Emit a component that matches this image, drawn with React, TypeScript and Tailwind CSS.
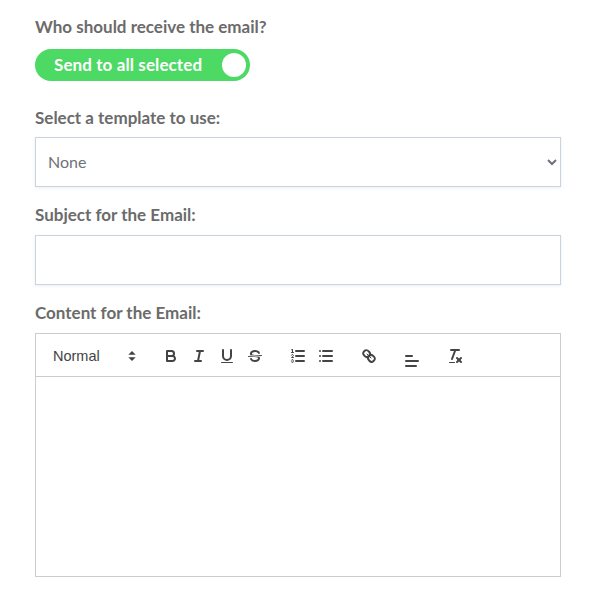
const label = "block text-[17px] leading-[24px] font-bold text-[#6b6b6b]";
const fieldBox =
  "block w-full h-[50px] border border-[#ccd2de] bg-white px-2 text-[16px] text-[#6e7278] shadow-[0_1px_3px_rgba(120,140,180,0.15)] outline-none";

const QuillIcon = ({ children }: { children: React.ReactNode }) => (
  <svg
    viewBox="0 0 18 18"
    className="w-[18px] h-[18px] block"
    fill="none"
    stroke="#444"
    strokeWidth={2}
    strokeLinecap="round"
    strokeLinejoin="round"
  >
    {children}
  </svg>
);

const Btn = ({ children, className = "" }: { children: React.ReactNode; className?: string }) => (
  <span className={`w-[28px] h-[24px] px-[5px] py-[3px] block ${className}`}>
    <QuillIcon>{children}</QuillIcon>
  </span>
);

const Toolbar = () => (
  <div className="h-[43px] border-b border-[#ccc] flex items-center px-[8px] pt-[2px] font-['Liberation_Sans',sans-serif]">
    <div className="w-[98px] mr-[15px] h-[24px] flex items-center justify-between pl-[9px] pr-[1px] text-[14.5px] font-medium text-[#444]">
      <span className="mt-[1px]">Normal</span>
      <svg viewBox="0 0 18 18" className="w-[18px] h-[18px]" fill="#444" stroke="#444" strokeWidth={1.4}>
        <polygon points="7 11 9 13 11 11 7 11" />
        <polygon points="7 7 9 5 11 7 7 7" />
      </svg>
    </div>
    <div className="flex mr-[15px]">
      <Btn>
        <path d="M5,4H9.5A2.5,2.5,0,0,1,12,6.5v0A2.5,2.5,0,0,1,9.5,9H5A0,0,0,0,1,5,9V4A0,0,0,0,1,5,4Z" />
        <path d="M5,9h5.5A2.5,2.5,0,0,1,13,11.5v0A2.5,2.5,0,0,1,10.5,14H5a0,0,0,0,1,0,0V9A0,0,0,0,1,5,9Z" />
      </Btn>
      <Btn>
        <line x1="7" x2="13" y1="4" y2="4" />
        <line x1="5" x2="11" y1="14" y2="14" />
        <line x1="8" x2="10" y1="14" y2="4" />
      </Btn>
      <Btn>
        <path d="M5,3V9a4.012,4.012,0,0,0,4,4H9a4.012,4.012,0,0,0,4-4V3" />
        <rect x="3" y="15" width="12" height="1" rx="0.5" fill="#444" stroke="none" />
      </Btn>
      <Btn>
        <line x1="15.5" x2="2.5" y1="8.5" y2="9.5" strokeWidth={1} />
        <path
          fill="#444"
          stroke="none"
          d="M9.007,8C6.542,7.791,6,7.519,6,6.5,6,5.792,7.283,5,9,5c1.571,0,2.765.679,2.969,1.309a1,1,0,0,0,1.9-.617C13.356,4.106,11.354,3,9,3,6.2,3,4,4.538,4,6.5a3.2,3.2,0,0,0,.5,1.843Z"
        />
        <path
          fill="#444"
          stroke="none"
          d="M8.984,10C11.457,10.208,12,10.479,12,11.5c0,.708-1.283,1.5-3,1.5-1.571,0-2.765-.679-2.969-1.309a1,1,0,1,0-1.9.617C4.644,13.894,6.646,15,9,15c2.8,0,5-1.538,5-3.5a3.2,3.2,0,0,0-.5-1.843Z"
        />
      </Btn>
    </div>
    <div className="flex mr-[15px]">
      <Btn>
        <line x1="7" x2="15" y1="4" y2="4" />
        <line x1="7" x2="15" y1="9" y2="9" />
        <line x1="7" x2="15" y1="14" y2="14" />
        <line x1="2.5" x2="4.5" y1="5.5" y2="5.5" strokeWidth={1} />
        <path
          fill="#444"
          stroke="none"
          d="M3.5,6A0.5,0.5,0,0,1,3,5.5V3.085l-0.276.138A0.5,0.5,0,0,1,2.053,3c-0.124-.247-0.023-0.324.224-0.447l1-.5A0.5,0.5,0,0,1,4,2.5v3A0.5,0.5,0,0,1,3.5,6Z"
        />
        <path strokeWidth={1} d="M4.5,10.5h-2c0-.234,1.85-1.076,1.85-2.234A0.959,0.959,0,0,0,2.5,8.156" />
        <path
          strokeWidth={1}
          d="M2.5,14.846a0.959,0.959,0,0,0,1.85-.109A0.7,0.7,0,0,0,3.75,14a0.688,0.688,0,0,0,.6-0.736,0.959,0.959,0,0,0-1.85-.109"
        />
      </Btn>
      <Btn>
        <line x1="6" x2="15" y1="4" y2="4" />
        <line x1="6" x2="15" y1="9" y2="9" />
        <line x1="6" x2="15" y1="14" y2="14" />
        <line x1="3" x2="3" y1="4" y2="4" />
        <line x1="3" x2="3" y1="9" y2="9" />
        <line x1="3" x2="3" y1="14" y2="14" />
      </Btn>
    </div>
    <div className="flex mr-[15px]">
      <Btn>
        <line x1="7" x2="11" y1="7" y2="11" strokeWidth={1} />
        <path d="M8.9,4.577a3.476,3.476,0,0,1,.36,4.679A3.476,3.476,0,0,1,4.577,8.9C3.185,7.5,2.035,6.4,4.217,4.217S7.5,3.185,8.9,4.577Z" />
        <path d="M13.423,9.1a3.476,3.476,0,0,0-4.679-.36,3.476,3.476,0,0,0,.36,4.679c1.392,1.392,2.5,2.542,4.679.36S14.815,10.5,13.423,9.1Z" />
      </Btn>
    </div>
    <div className="flex mr-[15px] mt-[10px]">
      <Btn>
        <line x1="3" x2="15" y1="9" y2="9" />
        <line x1="3" x2="13" y1="14" y2="14" />
        <line x1="3" x2="9" y1="4" y2="4" />
      </Btn>
    </div>
    <div className="flex">
      <Btn>
        <line x1="5" x2="13" y1="3" y2="3" />
        <line x1="6" x2="9.35" y1="12" y2="3" />
        <line x1="11" x2="15" y1="11" y2="15" />
        <line x1="15" x2="11" y1="11" y2="15" />
        <rect x="3" y="15" width="6" height="1" rx="0.5" fill="#444" stroke="none" />
      </Btn>
    </div>
  </div>
);

export default function App() {
  return (
    <div className="w-[596px] h-[602px] overflow-hidden bg-white px-[35px] pt-[15px] flex flex-col font-['Lato',sans-serif]">
      <label className={label}>Who should receive the email?</label>
      <div className="mt-[10px] shrink-0 w-[215px] h-[32px] rounded-full bg-[#4cd964] flex items-center justify-between pl-[19px] pr-[4px]">
        <span className="text-[17px] tracking-[0.1px] font-bold text-white">Send to all selected</span>
        <span className="w-[24px] h-[24px] rounded-full bg-white" />
      </div>

      <label className={`${label} mt-[25px] mb-[7px]`}>Select a template to use:</label>
      <select defaultValue="None" className={`${fieldBox} shrink-0 pb-[2px]`}>
        <option>None</option>
      </select>

      <label className={`${label} mt-[16px] mb-[8px]`}>Subject for the Email:</label>
      <input type="text" className={`${fieldBox} shrink-0`} />

      <label className={`${label} mt-[16px] mb-[8px]`}>Content for the Email:</label>
      <div className="border border-[#ccc] h-[244px] shrink-0">
        <Toolbar />
      </div>

      <label className={`${label} mt-[20px] shrink-0`}>Add attachments:</label>
    </div>
  );
}
